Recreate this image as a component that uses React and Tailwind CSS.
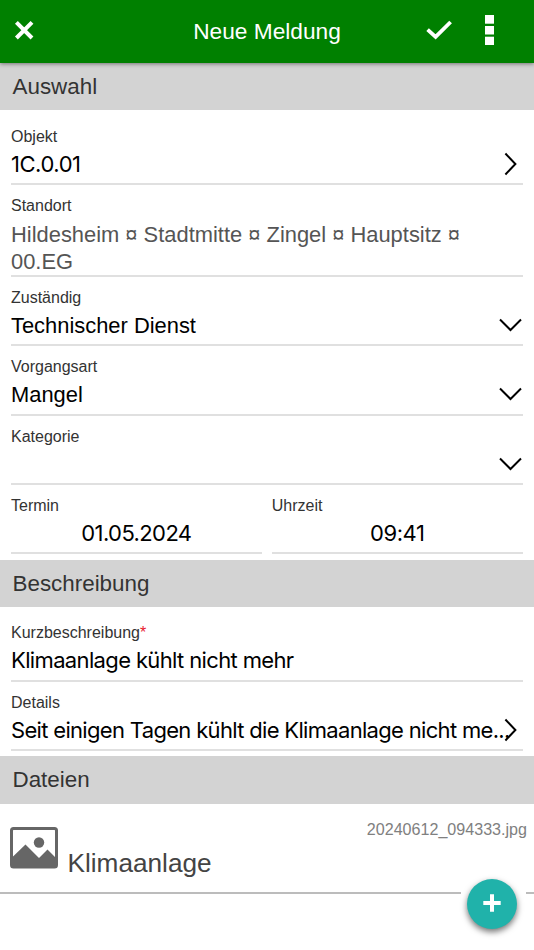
import React from 'react';

const HELVETICA = "font-['Liberation_Sans',Arial,sans-serif]";
const SYSTEM = "font-['Inter',sans-serif]";

const ChevronRight = () => (
  <svg className="w-[13px] h-[24px]" viewBox="0 0 13 24" fill="none" stroke="#000" strokeWidth="2">
    <path d="M1.4 1.5L11.4 12L1.4 22.5" />
  </svg>
);

const ChevronDown = () => (
  <svg className="w-[23px] h-[14px]" viewBox="0 0 23 14" fill="none" stroke="#000" strokeWidth="2">
    <path d="M1 1.5L11.5 12L22 1.5" />
  </svg>
);

const Header = () => (
  <header className="relative z-10 h-[63px] shrink-0 bg-[#008000] text-white shadow-[0_1px_4px_rgba(0,0,0,0.45)] grid grid-cols-[1fr_auto_1fr] items-center">
    <button className="w-[20px] h-[20px] ml-[14px] -mt-[4px]" aria-label="Schließen">
      <svg className="w-[20px] h-[20px]" viewBox="0 0 20 20" fill="none" stroke="currentColor" strokeWidth="4">
        <path d="M2.4 2.4L18 18M18 2.4L2.4 18" />
      </svg>
    </button>
    <h1 className="text-[22.7px] leading-[26px] -mt-[2px] whitespace-nowrap">Neue Meldung</h1>
    <div className="flex items-center justify-end pr-[40px] gap-[33px] -mt-[4px]">
      <svg className="w-[26px] h-[20px]" viewBox="0 0 26 20" fill="none" stroke="currentColor" strokeWidth="3.8">
        <path d="M1.6 9.6L9.6 16.8L24.6 2" />
      </svg>
      <svg className="w-[9px] h-[30px]" viewBox="0 0 9 30" fill="currentColor">
        <rect width="9" height="8.7" />
        <rect y="11" width="9" height="8.5" />
        <rect y="21.7" width="9" height="8.3" />
      </svg>
    </div>
  </header>
);

const SectionTitle = ({ className = 'h-[47px]', children }) => (
  <h2 className={`pl-[12.5px] bg-[#d3d3d3] text-[#333] text-[22.4px] leading-[47px] ${className}`}>{children}</h2>
);

const Field = ({ label, required, icon, className = 'h-[69.3px]', valueClass, children }) => (
  <div className={`border-b-2 border-[#e0e0e0] pt-[11px] flex flex-col ${className}`}>
    <div className="text-[16px] leading-[20px] text-[#333]">
      {label}
      {required && <span className="text-[#e8202c]">*</span>}
    </div>
    <div className="relative flex items-center mt-[4px]">
      <div className={`flex-1 min-w-0 min-h-[27px] leading-[27px] ${valueClass}`}>{children}</div>
      {icon && <span className="absolute right-px top-0 h-[26px] flex items-center">{icon}</span>}
    </div>
  </div>
);

const right = <span className="mr-[5px]"><ChevronRight /></span>;
const down = <ChevronDown />;

const FileRow = ({ title, name }) => (
  <div className="h-[90px] border-b-2 border-[#bcbcbc] flex pl-[10px] pr-[7px]">
    <svg className="w-[48px] h-[42px] mt-[23px] shrink-0" viewBox="0 0 48 42">
      <rect x="1.5" y="1.5" width="45" height="38.5" rx="2" fill="none" stroke="#666" strokeWidth="3" />
      <path d="M2 30.5L15.5 17.5L29 31L37.5 22.5L46 31V40H2Z" fill="#666" />
      <circle cx="29" cy="15.5" r="5.2" fill="#666" />
    </svg>
    <div className="ml-[9.5px] mt-[43px] text-[26.2px] leading-[32px] text-[#444]">{title}</div>
    <div className="ml-auto mt-[15px] text-[16.1px] leading-[20px] text-[#808080]">{name}</div>
  </div>
);

const App = () => {
  return (
    <div className={`relative w-[534px] h-[950px] overflow-hidden bg-white flex flex-col ${HELVETICA}`}>
      <Header />

      <SectionTitle>Auswahl</SectionTitle>
      <div className="pl-[11px] pr-[11.4px] pt-[5.6px] pb-[5.4px]">
        <Field label="Objekt" icon={right} valueClass={`${SYSTEM} text-[22px] tracking-[-0.45px]`}>1C.0.01</Field>
        <Field label="Standort" className="h-[92.2px]" valueClass="text-[21.9px] text-[#555] mt-px">
          Hildesheim ¤ Stadtmitte ¤ Zingel ¤ Hauptsitz ¤ 00.EG
        </Field>
        <Field label="Zuständig" icon={down} valueClass="text-[21.9px]">Technischer Dienst</Field>
        <Field label="Vorgangsart" icon={down} valueClass="text-[21.9px]">Mangel</Field>
        <Field label="Kategorie" icon={down} />
        <div className="grid grid-cols-2 gap-[10px]">
          <Field label="Termin" valueClass={`${SYSTEM} text-[22px] tracking-[-0.6px] text-center`}>01.05.2024</Field>
          <Field label="Uhrzeit" valueClass={`${SYSTEM} text-[22px] tracking-[-0.4px] text-center`}>09:41</Field>
        </div>
      </div>

      <SectionTitle className="h-[47.4px]">Beschreibung</SectionTitle>
      <div className="pl-[11px] pr-[11.4px] pt-[5.2px] pb-[5.6px]">
        <Field label="Kurzbeschreibung" required valueClass={`${SYSTEM} text-[22px] tracking-[-0.64px]`}>
          Klimaanlage kühlt nicht mehr
        </Field>
        <Field label="Details" icon={right} valueClass={`${SYSTEM} text-[22px] tracking-[-0.68px] whitespace-nowrap`}>
          Seit einigen Tagen kühlt die Klimaanlage nicht me...
        </Field>
      </div>

      <SectionTitle className="h-[47.4px]">Dateien</SectionTitle>
      <FileRow title="Klimaanlage" name="20240612_094333.jpg" />

      {/* floating add button, the white frame interrupts the divider */}
      <div className="absolute left-[460.5px] top-[871px] w-[65.5px] h-[65px] bg-white flex items-center justify-center">
        <button className="w-[50px] h-[50px] mr-[3px] rounded-full bg-[#20b2aa] shadow-[0_3px_6px_rgba(0,0,0,0.55)] flex items-center justify-center" aria-label="Hinzufügen">
          <svg className="w-[18px] h-[18px] -mt-[2px]" viewBox="0 0 18 18" fill="none" stroke="#fff" strokeWidth="4">
            <path d="M9 0.3V17.7M0.3 9H17.7" />
          </svg>
        </button>
      </div>
    </div>
  );
};

export default App;
